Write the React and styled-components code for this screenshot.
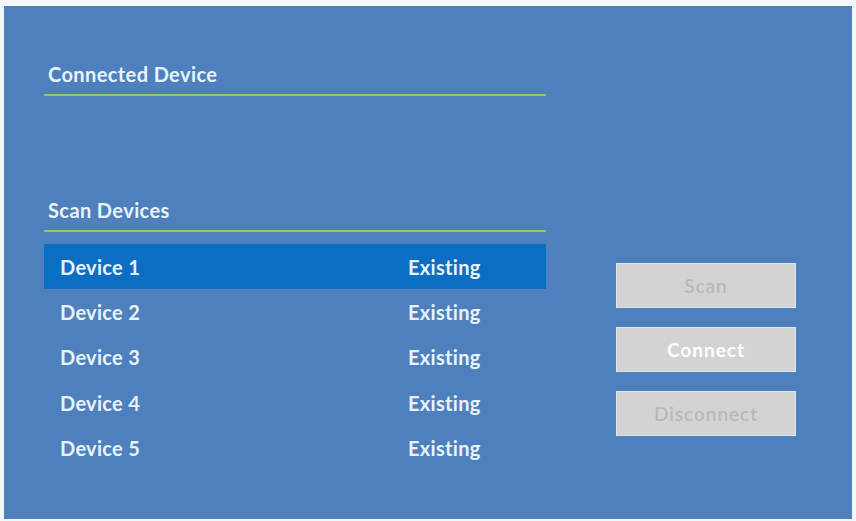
import React from "react";
import styled, { createGlobalStyle } from "styled-components";

const Global = createGlobalStyle`
  html, body { margin: 0; padding: 0; background: #f3f6f8; }
  body { font-family: Lato, "Open Sans", sans-serif; }
`;

const Page = styled.div`
  width: 856px;
  height: 521px;
  padding: 6px 4px 2px 4px;
  box-sizing: border-box;
`;

const Panel = styled.div`
  width: 848px;
  height: 513px;
  background: #4f80be;
  box-sizing: border-box;
  padding: 54px 0 0 40px;
  display: flex;
  flex-direction: column;
`;

const Header = styled.div`
  width: 502px;
  box-sizing: border-box;
  padding: 0 0 6px 4px;
  line-height: 28px;
  font-size: 20px;
  font-weight: 700;
  letter-spacing: 0.4px;
  color: #e8f4fb;
  border-bottom: 2px solid #93c56a;
`;

const ConnectedArea = styled.div`
  height: 100px;
`;

const ScanRow = styled.div`
  display: flex;
  align-items: flex-start;
`;

const ScanSection = styled.div`
  width: 502px;
  display: flex;
  flex-direction: column;
`;

const List = styled.div`
  margin-top: 12px;
  display: flex;
  flex-direction: column;
`;

const Row = styled.div`
  display: grid;
  grid-template-columns: 348px 1fr;
  align-items: center;
  height: 45.3px;
  padding-left: 16px;
  font-size: 20px;
  font-weight: 700;
  letter-spacing: 0.3px;
  color: #e8f4fb;
  background: ${(p) => (p.$selected ? "#0a6fc3" : "transparent")};
`;

const ButtonStack = styled.div`
  margin-left: 70px;
  padding-top: 67px;
  display: flex;
  flex-direction: column;
  gap: 19px;
`;

const Button = styled.button`
  width: 180px;
  height: 45px;
  background: #d3d3d3;
  border: 1px solid #e2e4e8;
  font-family: Lato, "Open Sans", sans-serif;
  font-size: 19px;
  font-weight: ${(p) => (p.$active ? 700 : 500)};
  letter-spacing: 1px;
  color: ${(p) => (p.$active ? "#ffffff" : "#b7b7b7")};
  padding: 0;
  cursor: default;
`;

const devices = [1, 2, 3, 4, 5].map((n) => ({ name: `Device ${n}`, status: "Existing" }));

export default function App() {
  return (
    <>
      <Global />
      <Page>
        <Panel>
          <Header>Connected Device</Header>
          <ConnectedArea />
          <ScanRow>
            <ScanSection>
              <Header>Scan Devices</Header>
              <List>
                {devices.map((d, i) => (
                  <Row key={d.name} $selected={i === 0}>
                    <span>{d.name}</span>
                    <span>{d.status}</span>
                  </Row>
                ))}
              </List>
            </ScanSection>
            <ButtonStack>
              <Button>Scan</Button>
              <Button $active>Connect</Button>
              <Button>Disconnect</Button>
            </ButtonStack>
          </ScanRow>
        </Panel>
      </Page>
    </>
  );
}
